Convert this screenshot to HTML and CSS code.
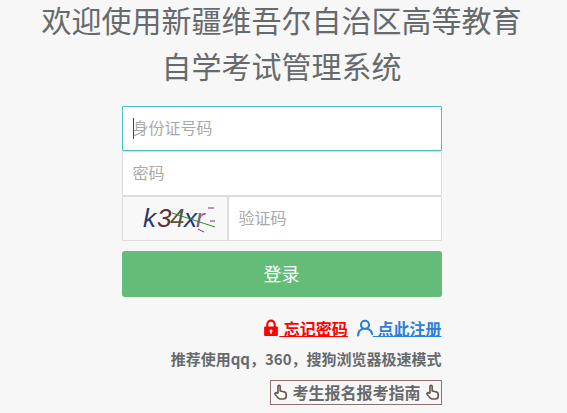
FILE: index.html
```html
<!DOCTYPE html>
<html lang="zh-CN">
<head>
<meta charset="utf-8">
<title>登录</title>
<link rel="stylesheet" href="styles.css">
</head>
<body>
<main class="page">
  <h1 class="title"><span class="title-line">欢迎使用新疆维吾尔自治区高等教育</span><span class="title-line">自学考试管理系统</span></h1>
  <form class="form">
    <div class="fields">
      <div class="field field-focus"><span class="caret"></span><span class="ph">身份证号码</span></div>
      <div class="field"><span class="ph">密码</span></div>
      <div class="captcha-row">
        <div class="captcha">
          <svg class="captcha-img" width="105" height="43" viewBox="0 0 105 43">
            <text class="c1" x="20" y="30">k</text>
            <text class="c2" x="34" y="30">3</text>
            <text class="c3" x="47" y="30">4</text>
            <text class="c4" x="61" y="30">x</text>
            <text class="c5" x="73" y="30">r</text>
            <path class="n1" d="M49 16 L92 30"/>
            <path class="n2" d="M85 11h6M87 24h5M75 32l6 3"/>
          </svg>
        </div>
        <div class="field field-code"><span class="ph">验证码</span></div>
      </div>
    </div>
    <button class="submit" type="button">登录</button>
    <div class="links">
      <a class="link link-red">
        <svg class="ico" width="16" height="18" viewBox="0 0 15 17"><path fill="#f00" d="M2 7h1V5a4.500 4.500 0 0 1 9 0v2h1a1 1 0 0 1 1 1v7a1 1 0 0 1-1 1H2a1 1 0 0 1-1-1V8a1 1 0 0 1 1-1zm3 0h5V5a2.500 2.500 0 0 0-5 0zm2.500 2.800a1.400 1.400 0 0 0-.7 2.600V14h1.400v-1.600a1.400 1.400 0 0 0-.7-2.600z"/></svg><span class="u"> 忘记密码</span>
      </a>
      <a class="link link-blue">
        <svg class="ico" width="16" height="18" viewBox="0 0 15 17"><circle cx="7.500" cy="5.500" r="3.800" fill="none" stroke="#2a7fd8" stroke-width="2"/><path fill="none" stroke="#2a7fd8" stroke-width="2" stroke-linecap="round" d="M1 15.500c0-3.500 2-5.500 4.500-6.300M9.500 9.200c2.500.6 4.200 2.500 4.800 5"/></svg><span class="u"> 点此注册</span>
      </a>
    </div>
    <p class="tip">推荐使用qq，360，搜狗浏览器极速模式</p>
    <div class="guide-row">
      <a class="guide">
        <svg class="hand" width="15" height="16" viewBox="0 0 15 16"><path fill="#fff" stroke="#6b5a50" stroke-width="1.700" stroke-linejoin="round" d="M5 9V2.500a1.100 1.100 0 0 1 2.200 0V7l4 .8c1.300.3 2 1 2 2.200v2c0 1.800-1.300 3-3 3H7.500c-1 0-1.800-.5-2.400-1.300L2.200 10.500c-.9-1.300.8-2.500 1.800-1.300z"/></svg>
        <span>考生报名报考指南</span>
        <svg class="hand" width="15" height="16" viewBox="0 0 15 16"><path fill="#fff" stroke="#6b5a50" stroke-width="1.700" stroke-linejoin="round" d="M5 9V2.500a1.100 1.100 0 0 1 2.200 0V7l4 .8c1.300.3 2 1 2 2.200v2c0 1.800-1.300 3-3 3H7.500c-1 0-1.800-.5-2.400-1.300L2.200 10.500c-.9-1.300.8-2.500 1.800-1.300z"/></svg>
      </a>
    </div>
  </form>
</main>
</body>
</html>
```

FILE: styles.css
```css
* { box-sizing: border-box; }
html, body { margin: 0; padding: 0; height: 413px; overflow: hidden; }
body {
  background: #f7f7f7;
  color: #676a6c;
  font-family: "Noto Sans CJK SC", "Open Sans", sans-serif;
}
.page { display: flex; flex-direction: column; align-items: center; padding: 0 4px 0 0; }
.title {
  margin: 0 0 16px;
  font-family: "Liberation Sans", "Noto Sans CJK SC", sans-serif;
  font-size: 30px;
  font-weight: 400;
  text-align: center;
  color: #676a6c;
}
.title-line { display: block; line-height: 44px; }
.title-line + .title-line { margin-top: 2px; }
.form { width: 320px; display: flex; flex-direction: column; }
.fields { display: flex; flex-direction: column; }
.field {
  height: 45px;
  background: #fff;
  border: 1px solid #dcdcdc;
  border-radius: 1px;
  display: flex;
  align-items: center;
  padding: 0 0 4px 10px;
  font-size: 16px;
  position: relative;
}
.field-focus { border-color: #4cbdbd; }
.ph { color: #a9a9a9; }
.caret { position: absolute; left: 10px; top: 11px; width: 1px; height: 21px; background: #444; }
.captcha-row { display: flex; height: 45px; }
.captcha { width: 106px; border: 1px solid #dcdcdc; background: #f8f8f8; flex: none; }
.captcha-img { display: block; }
.captcha-img text { font-family: "Liberation Sans", sans-serif; font-style: italic; font-size: 26px; }
.c1 { fill: #2c3a6a; }
.c2 { fill: #5f3238; }
.c3 { fill: #5a5640; }
.c4 { fill: #233a70; }
.c5 { fill: #80607e; }
.n1 { stroke: #2d8a22; stroke-width: 1; fill: none; }
.n2 { stroke: #6a3a70; stroke-width: 1; fill: none; }
.field-code { flex: 1; }
.submit {
  margin-top: 10px;
  height: 46px;
  border: 0;
  border-radius: 3px;
  background: #63bd78;
  color: #fff;
  font: 400 18px "Noto Sans CJK SC", sans-serif;
  padding: 0 0 3px;
}
.links {
  margin-top: 20px;
  display: flex;
  justify-content: flex-end;
  align-items: center;
  gap: 9px;
  font-size: 16px;
  font-weight: 700;
  line-height: 22px;
}
.link { display: flex; align-items: center; white-space: pre; }
.ico { flex: none; }
.u { text-decoration: underline; word-spacing: 1px; }
.link-red { color: #f00; }
.link-blue { color: #2a7fd8; }
.tip {
  margin: 10px 0 0;
  text-align: right;
  font-size: 15px;
  font-weight: 700;
  line-height: 20px;
  color: #676a6c;
}
.guide-row { display: flex; justify-content: flex-end; margin-top: 11px; }
.guide {
  display: flex;
  align-items: center;
  gap: 4px;
  height: 25px;
  padding: 0 1px 2px 2px;
  border: 1px solid #8c7272;
  font-size: 16px;
  font-weight: 700;
  color: #676a6c;
}
.hand { flex: none; }
```
